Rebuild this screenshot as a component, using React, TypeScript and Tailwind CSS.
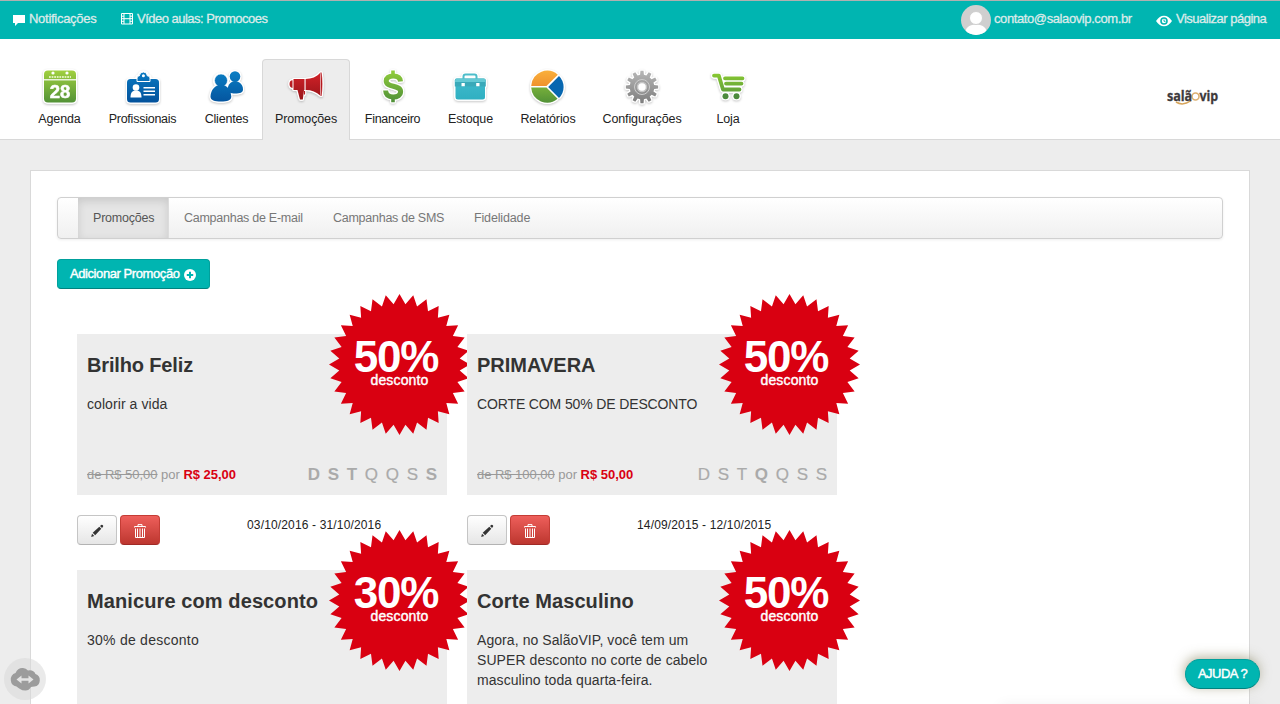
import type { ReactNode } from "react";

const outline =
  "[filter:drop-shadow(1px_0_0_#fff)_drop-shadow(-1px_0_0_#fff)_drop-shadow(0_1px_0_#fff)_drop-shadow(0_-1px_0_#fff)_drop-shadow(0_1px_1px_rgba(0,0,0,0.22))]";

function Grad({ id, from, to }: { id: string; from: string; to: string }) {
  return (
    <linearGradient id={id} x1="0" y1="3" x2="0" y2="37" gradientUnits="userSpaceOnUse">
      <stop offset="0" stopColor={from} />
      <stop offset="1" stopColor={to} />
    </linearGradient>
  );
}

function NavIcon({ children }: { children: ReactNode }) {
  return (
    <svg width="40" height="40" viewBox="0 0 40 40" className={`overflow-visible ${outline}`}>
      {children}
    </svg>
  );
}

function CalendarIcon() {
  return (
    <NavIcon>
      <Grad id="cal" from="#a2d13f" to="#4f8f36" />
      <rect x="4" y="3.5" width="32" height="32" rx="4" fill="url(#cal)" />
      <rect x="4" y="12.2" width="32" height="1.2" fill="#fff" />
      <circle cx="13" cy="6" r="1.6" fill="#fff" />
      <circle cx="27" cy="6" r="1.6" fill="#fff" />
      <path d="M9 10h22" stroke="#dff0b8" strokeWidth="1.8" strokeDasharray="1.8 0.8" />
      <text x="20" y="30.5" textAnchor="middle" fontSize="18.5" fontWeight="700" fill="#fff" stroke="#fff" strokeWidth=".5" fontFamily="Liberation Sans, sans-serif">
        28
      </text>
    </NavIcon>
  );
}

function BadgeIcon() {
  return (
    <NavIcon>
      <Grad id="bdg" from="#0a7cc4" to="#03509a" />
      <rect x="4" y="12" width="32" height="23.5" rx="3.5" fill="url(#bdg)" />
      <path d="M14 14.5V11q0-2.2 2.4-2.2Q16.600 5 20.400 5t3.900 3.800Q27 8.800 27 11v3.500z" fill="url(#bdg)" stroke="#fff" strokeWidth="1" />
      <circle cx="20.400" cy="8.700" r="1.500" fill="#fff" />
      <circle cx="13" cy="20.500" r="3.300" fill="#fff" />
      <path d="M7.500 30.500c0-4.500 1.500-7 5.500-7s5.500 2.500 5.500 7z" fill="#fff" />
      <path d="M20.500 20.800H32M20.500 24.300H32M20.500 27.800H32" stroke="#fff" strokeWidth="1.500" />
    </NavIcon>
  );
}

function PeopleIcon() {
  return (
    <NavIcon>
      <Grad id="ppl" from="#0a80c6" to="#04529c" />
      <circle cx="28" cy="9.500" r="5.300" fill="url(#ppl)" />
      <path d="M20.500 22.500C21 17 24 14.500 28 14c5 .5 8 4 8 8.500 0 3-3 4-8 4-4 0-7.500-1-7.500-4z" fill="url(#ppl)" />
      <circle cx="14" cy="13.500" r="6.500" fill="url(#ppl)" stroke="#fff" strokeWidth=".6" />
      <path d="M3.500 29.500C4 22.500 8 18 14 18s9.800 4.500 10.300 11.500c0 4-4 5-10.300 5s-10.500-1-10.500-5z" fill="url(#ppl)" />
    </NavIcon>
  );
}

function MegaphoneIcon() {
  return (
    <NavIcon>
      <Grad id="meg" from="#d8232a" to="#8e1216" />
      <path d="M7.500 12h11v11h-11z" fill="url(#meg)" />
      <path d="M6.500 13.300v7.600c-2 0-3-1.700-3-3.800s1-3.800 3-3.800z" fill="url(#meg)" />
      <path d="M19.600 12c6 0 11-2 14.600-6.200v22.800C30.600 25 25.600 23 19.600 23z" fill="url(#meg)" />
      <path d="M35 5.500c1.400 6 1.400 17 0 23.500z" fill="#b51a1f" stroke="#b51a1f" strokeWidth=".6" />
      <path d="M11.500 23H18l-1.200 9.500H14z" fill="url(#meg)" />
      <path d="M18.500 24v3.500" stroke="#b51a1f" strokeWidth="1.200" />
    </NavIcon>
  );
}

function DollarIcon() {
  return (
    <NavIcon>
      <Grad id="dol" from="#93cf3c" to="#4b8c38" />
      <path d="M18.200 3.500h3.600v7h-3.600zM18.200 28h3.600v7.200h-3.600z" fill="url(#dol)" />
      <path
        d="M27.500 14.500C27.200 10.700 24.500 9 20.200 9c-4.400 0-7 1.900-7 5 0 7 14.400 3.600 14.400 10.600 0 3.500-3 5.400-7.400 5.400-4.800 0-7.400-2.200-7.600-6.500"
        fill="none"
        stroke="url(#dol)"
        strokeWidth="5"
      />
    </NavIcon>
  );
}

function CaseIcon() {
  return (
    <NavIcon>
      <Grad id="cas" from="#46bfd0" to="#2cadbf" />
      <path d="M12.500 12V9.500q0-2 2-2h9q2 0 2 2V12" fill="none" stroke="#4cbdca" strokeWidth="2" />
      <rect x="4.500" y="13" width="29.500" height="19.500" rx="2.500" fill="url(#cas)" />
      <path d="M5.500 11.500h27.500q1.800 0 1.800 2v6h-31v-6q0-2 1.700-2z" fill="#39a9b9" />
      <path d="M6 11.500h26.500q2 0 2 2v1.500h-30.500v-1.500q0-2 2-2z" fill="#63c9d4" />
      <path d="M10.500 16h3.300v3.200h-3.300zM25.200 16h3.300v3.200h-3.300z" fill="#fff" />
    </NavIcon>
  );
}

function PieIcon() {
  return (
    <NavIcon>
      <Grad id="po" from="#fab13c" to="#e4701c" />
      <Grad id="pg" from="#a0d040" to="#4f8f36" />
      <path d="M18.500 19H3.200a16 16 0 0 1 26.600-11.200z" fill="url(#po)" />
      <path d="M18.500 20.600H3.200a16 16 0 0 0 26.400 11.200z" fill="url(#pg)" />
      <path d="M20.200 20 31 9a15.500 15.500 0 0 1 0 22z" fill="#0767b0" />
    </NavIcon>
  );
}

const gearPoints = Array.from({ length: 12 }, (_, i) => {
  const point = (degrees: number, radius: number) => {
    const angle = ((i * 30 + degrees) * Math.PI) / 180;
    return `${(20 + radius * Math.sin(angle)).toFixed(2)},${(20 - radius * Math.cos(angle)).toFixed(2)}`;
  };
  return [point(-9, 12.3), point(-5.5, 16.2), point(5.5, 16.2), point(9, 12.3)].join(" ");
}).join(" ");

function GearIcon() {
  return (
    <NavIcon>
      <Grad id="gr" from="#b8b8b8" to="#7c7c7c" />
      <polygon points={gearPoints} fill="url(#gr)" />
      <circle cx="20" cy="20" r="7.500" fill="none" stroke="#cdcdcd" strokeWidth="1" />
      <circle cx="20" cy="20" r="4.500" fill="#fff" stroke="#c4c4c4" strokeWidth="1.500" />
    </NavIcon>
  );
}

function CartIcon() {
  return (
    <NavIcon>
      <Grad id="crt" from="#8fd02f" to="#4a8840" />
      <path d="M6 8.600h4.800L15 22.500H31.500" fill="none" stroke="url(#crt)" strokeWidth="3.800" strokeLinecap="round" strokeLinejoin="round" />
      <path d="M17 11.300h17.500M18 16.600h15.500" stroke="url(#crt)" strokeWidth="3.800" strokeLinecap="round" />
      <circle cx="17.500" cy="29.300" r="3" fill="#4c8a3c" />
      <circle cx="28.500" cy="29.300" r="3" fill="#4c8a3c" />
    </NavIcon>
  );
}

const nav = [
  { label: "Agenda", icon: <CalendarIcon />, cls: "w-[69px]" },
  { label: "Profissionais", icon: <BadgeIcon />, cls: "w-[97px] tracking-[-0.24px]" },
  { label: "Clientes", icon: <PeopleIcon />, cls: "w-[71px] tracking-[-0.2px]" },
  { label: "Promoções", icon: <MegaphoneIcon />, cls: "w-[88px] rounded-t border border-b-0 border-[#d8d8d8] bg-[#ededed]" },
  { label: "Financeiro", icon: <DollarIcon />, cls: "w-[85px] tracking-[-0.3px]" },
  { label: "Estoque", icon: <CaseIcon />, cls: "w-[71px]" },
  { label: "Relatórios", icon: <PieIcon />, cls: "w-[84px]" },
  { label: "Configurações", icon: <GearIcon />, cls: "w-[104px]" },
  { label: "Loja", icon: <CartIcon />, cls: "w-[68px]" },
];

const burstPoints = Array.from({ length: 64 }, (_, i) => {
  const radius = i % 2 ? 60.5 : 70.5;
  const angle = (i * Math.PI) / 32;
  return `${(70.5 + radius * Math.sin(angle)).toFixed(2)},${(70.5 - radius * Math.cos(angle)).toFixed(2)}`;
}).join(" ");

type Promo = {
  title: string;
  titleTracking: string;
  text: string;
  textTracking: string;
  percent: string;
  from: string;
  to: string;
  bold: number[];
  dates: string;
};

const promos: Promo[] = [
  {
    title: "Brilho Feliz",
    titleTracking: "tracking-[-0.15px]",
    text: "colorir a vida",
    textTracking: "tracking-[0.07px]",
    percent: "50%",
    from: "de R$ 50,00",
    to: "R$ 25,00",
    bold: [0, 1, 2, 6],
    dates: "03/10/2016 - 31/10/2016",
  },
  {
    title: "PRIMAVERA",
    titleTracking: "tracking-[0px]",
    text: "CORTE COM 50% DE DESCONTO",
    textTracking: "tracking-[-0.13px]",
    percent: "50%",
    from: "de R$ 100,00",
    to: "R$ 50,00",
    bold: [3],
    dates: "14/09/2015 - 12/10/2015",
  },
  {
    title: "Manicure com desconto",
    titleTracking: "tracking-[0.1px]",
    text: "30% de desconto",
    textTracking: "tracking-[0.25px]",
    percent: "30%",
    from: "de R$ 50,00",
    to: "R$ 35,00",
    bold: [],
    dates: "",
  },
  {
    title: "Corte Masculino",
    titleTracking: "tracking-[0.08px]",
    text: "Agora, no SalãoVIP, você tem um SUPER desconto no corte de cabelo masculino toda quarta-feira.",
    textTracking: "tracking-[0.07px]",
    percent: "50%",
    from: "de R$ 50,00",
    to: "R$ 25,00",
    bold: [3],
    dates: "",
  },
];

function PromoCard({ promo }: { promo: Promo }) {
  return (
    <div className="h-[236px] w-[370px]">
      <div className="relative flex h-[161px] flex-col bg-[#ededed] px-[10px]">
        <h3 className={`mt-[21px] text-[20px] leading-5 font-bold text-[#333] ${promo.titleTracking}`}>{promo.title}</h3>
        <p className={`mt-[19px] w-[245px] text-[14px] leading-5 text-[#333] ${promo.textTracking}`}>{promo.text}</p>
        <div className="mt-auto mb-[10px] flex h-5 items-center justify-between">
          <p className="text-[13px] tracking-[-0.03px] text-[#999]">
            <s>{promo.from}</s> por <b className="tracking-[-0.02px] text-[#d90011]">{promo.to}</b>
          </p>
          <div className="flex gap-[7.7px] text-[17px] text-[#aaa]">
            {["D", "S", "T", "Q", "Q", "S", "S"].map((day, i) => (
              <span key={i} className={promo.bold.includes(i) ? "font-bold" : "[-webkit-text-stroke:0.2px_#aaa]"}>
                {day}
              </span>
            ))}
          </div>
        </div>
        <div className="absolute -top-10 left-[252px] h-[141px] w-[141px] text-white">
          <svg width="141" height="141" className="absolute inset-0">
            <polygon points={burstPoints} fill="#d90011" />
          </svg>
          <div className="relative flex flex-col items-center">
            <span className="mt-[40px] -ml-[7px] text-[44px] leading-[46px] font-bold tracking-[-1.2px]">{promo.percent}</span>
            <span className="-mt-[10px] text-[14px] leading-5 tracking-[0.15px] [-webkit-text-stroke:0.4px_#fff]">desconto</span>
          </div>
        </div>
      </div>
      <div className="mt-5 flex">
        <button className="flex h-[30px] w-10 items-center justify-center rounded border border-[#c5c5c5] border-b-[#b3b3b3] bg-linear-to-b from-white to-[#e6e6e6]">
          <svg width="14" height="14" viewBox="0 0 14 14" fill="#333" className="mt-px">
            <path d="M1.200 13 2 9.700 4.300 12.100zM2.700 8.700 9.300 2.700 11.300 4.700 5.200 11.300zM10 2.100 11.200 1Q11.900.5 12.500 1.100l.5.500q.5.600 0 1.200L12 4z" />
          </svg>
        </button>
        <button className="ml-[3px] flex h-[30px] w-10 items-center justify-center rounded border border-[#c43c35] border-b-[#a02a26] bg-linear-to-b from-[#ee5f5b] to-[#bd362f]">
          <svg width="12" height="14" viewBox="0 0 12 14" fill="none" stroke="#fff" className="mt-px">
            <path d="M.5 3.500V2.500h11v1M4 2.500V.6h4v1.900M1.500 4.500v9h9v-9M3.500 4.500v8.500M6 4.500v8.500M8.500 4.500v8.500" />
          </svg>
        </button>
        <span className="ml-[87px] text-[12px] leading-5 tracking-[0.15px] text-[#222]">{promo.dates}</span>
      </div>
    </div>
  );
}

export default function App() {
  return (
    <div className="relative flex h-[704px] w-[1280px] flex-col overflow-hidden bg-[#ededed] font-['Liberation_Sans',Arial,sans-serif] text-[13px] text-[#333]">
      <header className="flex h-[39px] shrink-0 items-center border-t border-[#b0b0b0] bg-[#00b5b1] text-[13px] text-[#dcebea] [-webkit-text-stroke:0.3px_#dcebea]">
        <svg width="12" height="11" viewBox="0 0 12 11" className="mt-px ml-[13px]" fill="#fff">
          <path d="M0 0h12v8H5l-3 3V8H0z" />
        </svg>
        <span className="mb-[2px] ml-[4px] w-[92px] tracking-[-0.28px]">Notificações</span>
        <svg width="12" height="12" viewBox="0 0 12 12" fill="none" stroke="#fff" className="mb-[2px]">
          <path d="M.5.500h11v10.500H.5zM3 .5V11M9 .5V11M3 5.700h6M.5 3.200H3M.5 5.700H3M.5 8.300H3M9 3.200h2.500M9 5.700h2.500M9 8.300h2.500" />
        </svg>
        <span className="mb-[2px] ml-[4px] tracking-[-0.51px]">Vídeo aulas: Promocoes</span>
        <svg width="30" height="30" viewBox="0 0 30 30" className="ml-auto">
          <defs>
            <clipPath id="av">
              <circle cx="15" cy="15" r="15" />
            </clipPath>
          </defs>
          <g clipPath="url(#av)">
            <rect width="30" height="30" fill="#cfcfcf" />
            <path d="M4 30c0-7 3.500-10.500 11-10.500S26 23 26 30z" fill="#fff" />
            <circle cx="15" cy="13" r="6.500" fill="#fff" stroke="#cfcfcf" />
          </g>
        </svg>
        <span className="mb-[2px] ml-[3px] w-[162px] tracking-[-0.4px]">contato@salaovip.com.br</span>
        <svg width="16" height="12" viewBox="0 0 16 12" className="mt-[2px]">
          <path d="M0 6Q3.500.7 8 .7T16 6Q12.500 11.300 8 11.300T0 6z" fill="#fff" />
          <circle cx="8" cy="6" r="3" fill="none" stroke="#00b5b1" strokeWidth="1.600" />
          <path d="M8 4.500V6.300H9.500" fill="none" stroke="#00b5b1" />
        </svg>
        <span className="mr-[13px] mb-[2px] ml-[4px] w-[91px] tracking-[-0.5px] whitespace-nowrap">Visualizar página</span>
      </header>

      <nav className="flex h-[101px] shrink-0 items-end border-b border-[#d8d8d8] bg-white pl-[25px] tracking-[-0.12px]">
        {nav.map((item) => (
          <a key={item.label} className={`-mb-px flex h-[81px] flex-col items-center ${item.cls}`}>
            <span className={item.label === "Promoções" ? "mt-[7px]" : "mt-2"}>{item.icon}</span>
            <span className="mt-[2px] text-[12.500px] leading-5 whitespace-nowrap text-[#222]">{item.label}</span>
          </a>
        ))}
        <svg width="56" height="24" viewBox="0 0 56 24" className="mr-[59px] mb-[30px] ml-auto overflow-visible" fontFamily="Open Sans, Noto Sans, sans-serif" fontWeight="700" fontSize="15">
          <path d="M11 17q7 4.500 15-1.500" fill="none" stroke="#d6a45a" strokeWidth="1.500" />
          <circle cx="30.500" cy="11.500" r="3.500" fill="none" stroke="#dcb070" strokeWidth="1.600" />
          <text x="2" y="15.500" textLength="25" lengthAdjust="spacingAndGlyphs" fill="#3d3a3c" stroke="#3d3a3c" strokeWidth=".3">
            salã
          </text>
          <text x="34.500" y="15.500" textLength="18.500" lengthAdjust="spacingAndGlyphs" fill="#3d3a3c" stroke="#3d3a3c" strokeWidth=".3">
            vip
          </text>
        </svg>
      </nav>

      <main className="mx-[30px] mt-[30px] h-[620px] shrink-0 border border-[#d9d9d9] bg-white px-[26px] pt-[26px]">
        <div className="flex h-[42px] rounded border border-[#d0d0d0] bg-linear-to-b from-white to-[#f0f0f0] pl-5 text-[12.500px] leading-10 tracking-[-0.26px] text-[#777] shadow-[0_1px_3px_rgba(0,0,0,0.07)]">
          <a className="w-[91px] border-r border-[#dcdcdc] bg-[#e5e5e5] pl-[15px] tracking-[-0.2px] text-[#555] shadow-[inset_0_3px_8px_rgba(0,0,0,0.125)]">Promoções</a>
          <a className="ml-[15px] w-[149px]">Campanhas de E-mail</a>
          <a className="w-[141px]">Campanhas de SMS</a>
          <a className="tracking-[-0.15px]">Fidelidade</a>
        </div>
        <button className="mt-5 flex h-[30px] w-[153px] items-center rounded border border-[#00a09c] border-b-[#00827f] bg-[#00b5b1] pl-[12px] text-[13px] tracking-[-0.42px] text-white [-webkit-text-stroke:0.4px_#fff]">
          <span className="w-[114px] text-left">Adicionar Promoção</span>
          <svg width="12" height="12" viewBox="0 0 12 12" className="mt-[2px]">
            <circle cx="6" cy="6" r="6" fill="#fff" />
            <path d="M6 2.800v6.400M2.800 6h6.400" stroke="#00b5b1" strokeWidth="2" />
          </svg>
        </button>
        <div className="mt-[45px] ml-5 flex w-[780px] flex-wrap gap-x-5">
          {promos.map((promo) => (
            <PromoCard key={promo.title} promo={promo} />
          ))}
        </div>
      </main>

      <svg width="42" height="42" viewBox="0 0 42 42" className="absolute top-[658px] left-1">
        <circle cx="21" cy="21" r="21" fill="#d9d9d9" fillOpacity=".55" />
        <path d="M12.500 28.500a7 7 0 0 1-1-13.500Q14 9.500 19 10q3 .2 5 2.500 5.500-1 7.500 3.500a6.500 6.500 0 0 1-1 12.500q-2.500 0-3.500.5-2 3.500-5.500 3.500T16 31Q14 29.500 12.500 28.500z" fill="#9c9c9c" />
        <path d="m12.500 21.500 5-4v2.800h7v-2.800l5 4-5 4v-2.800h-7v2.800z" fill="#e4e4e4" />
      </svg>
      <div className="absolute top-[705px] left-[1000px] h-5 w-[260px] shadow-[0_0_14px_rgba(0,0,0,0.06)]" />
      <button className="absolute top-[659px] left-[1185px] h-[30px] w-[75px] rounded-full border border-[#00a09c] border-b-[#00827f] bg-[#00b5b1] text-[13px] tracking-[-0.5px] text-white shadow-[-1px_-2px_12px_rgba(110,105,60,0.5)] [-webkit-text-stroke:0.4px_#fff]">
        AJUDA ?
      </button>
    </div>
  );
}
